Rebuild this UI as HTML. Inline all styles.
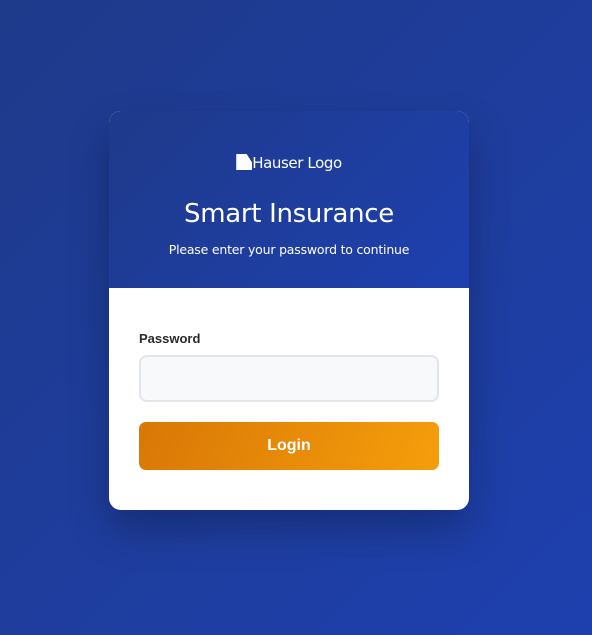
<!DOCTYPE html>
<html><head><style>
*{box-sizing:border-box;margin:0;padding:0}
html,body{width:592px;height:635px;overflow:hidden}
body{background:linear-gradient(135deg,#1e3a8a 0%,#1e40af 100%);font-family:"Liberation Sans","DejaVu Sans",sans-serif;position:relative}
.card{position:absolute;left:109px;top:111px;width:360px;height:399px;border-radius:12px;overflow:hidden;background:#fff;box-shadow:0 20px 40px rgba(0,0,0,0.25)}
.head{height:177px;background:linear-gradient(135deg,#1e3a8a,#1e40af);color:#fff;text-align:center;position:relative}
.logo{position:absolute;top:43px;left:0;right:0;font-family:"DejaVu Sans",sans-serif;font-size:15px;letter-spacing:-0.4px;color:#fff}
.logo i{display:inline-block;width:16px;height:16px;background:#fff;vertical-align:-2px;clip-path:polygon(0 0,65% 0,100% 55%,100% 100%,0 100%)}
h1{position:absolute;top:88px;left:0;right:0;font-family:"DejaVu Sans",sans-serif;font-size:26px;font-weight:normal;letter-spacing:-0.3px}
.sub{position:absolute;top:131px;left:0;right:0;font-family:"DejaVu Sans",sans-serif;font-size:12.5px;letter-spacing:-0.2px;color:#fff}
label{position:absolute;left:30px;top:220px;font-size:13px;font-weight:bold;color:#2a2a2a}
.inp{position:absolute;left:30px;top:244px;width:300px;height:47px;border:2px solid #e2e5ea;border-radius:8px;background:#f8f9fb}
.btn{position:absolute;left:30px;top:311px;width:300px;height:48px;border-radius:7px;background:linear-gradient(110deg,#d97706,#f59e0b);color:#fff;font-size:16px;font-weight:bold;text-align:center;line-height:48px}
</style></head><body>
<div class="card">
<div class="head">
<div class="logo"><i></i>Hauser Logo</div>
<h1>Smart Insurance</h1>
<div class="sub">Please enter your password to continue</div>
</div>
<label>Password</label>
<div class="inp"></div>
<div class="btn">Login</div>
</div>
</body></html>
